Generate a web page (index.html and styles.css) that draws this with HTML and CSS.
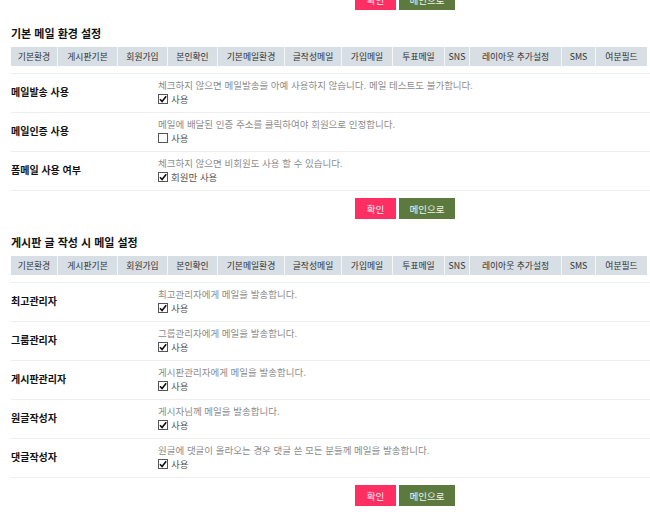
FILE: index.html
```html
<!DOCTYPE html>
<html lang="ko">
<head>
<meta charset="utf-8">
<link rel="stylesheet" href="styles.css">
</head>
<body>
<div class="page">
  <div class="actions actions-top">
    <button class="btn btn-ok">확인</button>
    <button class="btn btn-main">메인으로</button>
  </div>

  <section class="section">
    <h2 class="title">기본 메일 환경 설정</h2>
    <nav class="tabs">
      <span class="tab">기본환경</span>
      <span class="tab">게시판기본</span>
      <span class="tab">회원가입</span>
      <span class="tab">본인확인</span>
      <span class="tab">기본메일환경</span>
      <span class="tab">글작성메일</span>
      <span class="tab">가입메일</span>
      <span class="tab">투표메일</span>
      <span class="tab">SNS</span>
      <span class="tab">레이아웃 추가설정</span>
      <span class="tab">SMS</span>
      <span class="tab">여분필드</span>
    </nav>
    <div class="rows">
      <div class="row">
        <div class="label">메일발송 사용</div>
        <div class="field">
          <p class="help">체크하지 않으면 메일발송을 아예 사용하지 않습니다. 메일 테스트도 불가합니다.</p>
          <label class="check"><span class="box"><svg viewBox="0 0 10 10" width="10" height="10"><path d="M2 5.2 L4.1 7.6 L8.2 2.2" fill="none" stroke="#111" stroke-width="1.6"/></svg></span>사용</label>
        </div>
      </div>
      <div class="row">
        <div class="label">메일인증 사용</div>
        <div class="field">
          <p class="help">메일에 배달된 인증 주소를 클릭하여야 회원으로 인정합니다.</p>
          <label class="check"><span class="box"></span>사용</label>
        </div>
      </div>
      <div class="row">
        <div class="label">폼메일 사용 여부</div>
        <div class="field">
          <p class="help">체크하지 않으면 비회원도 사용 할 수 있습니다.</p>
          <label class="check"><span class="box"><svg viewBox="0 0 10 10" width="10" height="10"><path d="M2 5.2 L4.1 7.6 L8.2 2.2" fill="none" stroke="#111" stroke-width="1.6"/></svg></span>회원만 사용</label>
        </div>
      </div>
    </div>
    <div class="actions">
      <button class="btn btn-ok">확인</button>
      <button class="btn btn-main">메인으로</button>
    </div>
  </section>

  <section class="section">
    <h2 class="title">게시판 글 작성 시 메일 설정</h2>
    <nav class="tabs">
      <span class="tab">기본환경</span>
      <span class="tab">게시판기본</span>
      <span class="tab">회원가입</span>
      <span class="tab">본인확인</span>
      <span class="tab">기본메일환경</span>
      <span class="tab">글작성메일</span>
      <span class="tab">가입메일</span>
      <span class="tab">투표메일</span>
      <span class="tab">SNS</span>
      <span class="tab">레이아웃 추가설정</span>
      <span class="tab">SMS</span>
      <span class="tab">여분필드</span>
    </nav>
    <div class="rows">
      <div class="row">
        <div class="label">최고관리자</div>
        <div class="field">
          <p class="help">최고관리자에게 메일을 발송합니다.</p>
          <label class="check"><span class="box"><svg viewBox="0 0 10 10" width="10" height="10"><path d="M2 5.2 L4.1 7.6 L8.2 2.2" fill="none" stroke="#111" stroke-width="1.6"/></svg></span>사용</label>
        </div>
      </div>
      <div class="row">
        <div class="label">그룹관리자</div>
        <div class="field">
          <p class="help">그룹관리자에게 메일을 발송합니다.</p>
          <label class="check"><span class="box"><svg viewBox="0 0 10 10" width="10" height="10"><path d="M2 5.2 L4.1 7.6 L8.2 2.2" fill="none" stroke="#111" stroke-width="1.6"/></svg></span>사용</label>
        </div>
      </div>
      <div class="row">
        <div class="label">게시판관리자</div>
        <div class="field">
          <p class="help">게시판관리자에게 메일을 발송합니다.</p>
          <label class="check"><span class="box"><svg viewBox="0 0 10 10" width="10" height="10"><path d="M2 5.2 L4.1 7.6 L8.2 2.2" fill="none" stroke="#111" stroke-width="1.6"/></svg></span>사용</label>
        </div>
      </div>
      <div class="row">
        <div class="label">원글작성자</div>
        <div class="field">
          <p class="help">게시자님께 메일을 발송합니다.</p>
          <label class="check"><span class="box"><svg viewBox="0 0 10 10" width="10" height="10"><path d="M2 5.2 L4.1 7.6 L8.2 2.2" fill="none" stroke="#111" stroke-width="1.6"/></svg></span>사용</label>
        </div>
      </div>
      <div class="row">
        <div class="label">댓글작성자</div>
        <div class="field">
          <p class="help">원글에 댓글이 올라오는 경우 댓글 쓴 모든 분들께 메일을 발송합니다.</p>
          <label class="check"><span class="box"><svg viewBox="0 0 10 10" width="10" height="10"><path d="M2 5.2 L4.1 7.6 L8.2 2.2" fill="none" stroke="#111" stroke-width="1.6"/></svg></span>사용</label>
        </div>
      </div>
    </div>
    <div class="actions">
      <button class="btn btn-ok">확인</button>
      <button class="btn btn-main">메인으로</button>
    </div>
  </section>
</div>
</body>
</html>
```

FILE: styles.css
```css
html, body {
  margin: 0;
  padding: 0;
  background: #fff;
}
body {
  font-family: "Noto Sans CJK KR", "Noto Sans", sans-serif;
  color: #222;
  overflow: hidden;
}
.page {
  padding-left: 11px;
  width: 639px;
}
.actions {
  display: flex;
  gap: 3px;
  padding-left: 344px;
  height: 21px;
  margin-top: 7px;
}
.actions-top {
  margin-top: -11px;
}
.btn {
  border: 0;
  height: 21px;
  padding: 0;
  font-family: inherit;
  font-size: 9.5px;
  color: #f2f2f2;
  cursor: pointer;
}
.btn-ok {
  width: 41px;
  background: #ff2f63;
}
.btn-main {
  width: 56px;
  background: #5d7a3e;
}
.section {
  display: flex;
  flex-direction: column;
}
.title {
  margin: 0;
  margin-top: 16px;
  height: 14px;
  line-height: 14px;
  font-size: 11px;
  font-weight: bold;
  color: #111;
}
.tabs {
  margin-top: 7px;
  display: grid;
  grid-template-columns: 47px 60px 50px 50px 67px 57px 51px 52px 25px 92px 34px 51px;
  width: 636px;
  background: #d7dee4;
  height: 19px;
}
.tab {
  font-size: 8.8px;
  line-height: 19px;
  text-align: center;
  color: #333;
  border-right: 1px solid #f4f6f8;
  white-space: nowrap;
}
.tab:last-child {
  border-right: 0;
}
.rows {
  margin-top: 7px;
  border-top: 1px solid #eceeef;
}
.row {
  display: grid;
  grid-template-columns: 147px 1fr;
  align-items: center;
  height: 38px;
  border-bottom: 1px solid #eceeef;
}
.label {
  font-size: 10px;
  font-weight: bold;
  color: #111;
  padding-bottom: 3px;
}
.field {
  display: flex;
  flex-direction: column;
  gap: 1px;
  padding-bottom: 2px;
}
.help {
  margin: 0;
  font-size: 9.5px;
  line-height: 13px;
  color: #8c8c8c;
  white-space: nowrap;
}
.check {
  display: flex;
  align-items: center;
  gap: 3px;
  font-size: 9.5px;
  line-height: 13px;
  color: #555;
}
.box {
  width: 8px;
  height: 8px;
  border: 1px solid #555;
  background: #fff;
  display: flex;
  align-items: center;
  justify-content: center;
  overflow: visible;
}
.box svg {
  flex: none;
}
```
